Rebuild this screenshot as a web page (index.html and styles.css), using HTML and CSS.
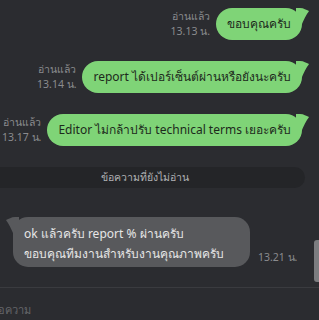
FILE: index.html
```html
<!DOCTYPE html>
<html lang="th">
<head>
    <meta charset="UTF-8">
    <title>Chat</title>
    <link rel="stylesheet" href="styles.css">
</head>
<body>
    <div class="chat">
        <div class="row out first">
            <div class="meta">
                <span>อ่านแล้ว</span>
                <span>13.13 น.</span>
            </div>
            <div class="bubble green">
                ขอบคุณครับ
                <svg class="tail-r" width="14" height="16" viewBox="0 0 14 16"><path d="M0 0 L4 0 C8 0 10 2 13 3 C11 6 9 9 6 16 L0 16 Z" fill="#7fd477"/></svg>
            </div>
        </div>
        <div class="row out">
            <div class="meta">
                <span>อ่านแล้ว</span>
                <span>13.14 น.</span>
            </div>
            <div class="bubble green">
                report ได้เปอร์เซ็นต์ผ่านหรือยังนะครับ
                <svg class="tail-r" width="14" height="16" viewBox="0 0 14 16"><path d="M0 0 L4 0 C8 0 10 2 13 3 C11 6 9 9 6 16 L0 16 Z" fill="#7fd477"/></svg>
            </div>
        </div>
        <div class="row out">
            <div class="meta">
                <span>อ่านแล้ว</span>
                <span>13.17 น.</span>
            </div>
            <div class="bubble green">
                Editor ไม่กล้าปรับ technical terms เยอะครับ
                <svg class="tail-r" width="14" height="16" viewBox="0 0 14 16"><path d="M0 0 L4 0 C8 0 10 2 13 3 C11 6 9 9 6 16 L0 16 Z" fill="#7fd477"/></svg>
            </div>
        </div>

        <div class="unread">ข้อความที่ยังไม่อ่าน</div>

        <div class="row in">
            <div class="bubble grey">
                <svg class="tail-l" width="14" height="16" viewBox="0 0 14 16"><path d="M14 0 L10 0 C6 0 4 2 1 3 C3 6 5 9 8 16 L14 16 Z" fill="#58595c"/></svg>
                <div class="line">ok แล้วครับ report % ผ่านครับ</div>
                <div class="line">ขอบคุณทีมงานสำหรับงานคุณภาพครับ</div>
            </div>
            <div class="meta time">13.21 น.</div>
        </div>
        <div class="thumb"></div>
    </div>
    <div class="composer">
        <span class="placeholder">ข้อความ</span>
    </div>
</body>
</html>
```

FILE: styles.css
```css
body {
    margin: 0;
    background-color: #2b2c30;
    font-family: "Noto Sans", "DejaVu Sans", sans-serif;
    overflow: hidden;
}

.chat {
    position: relative;
    height: 287px;
    border-bottom: 1px solid #3a3b3f;
}

.row {
    display: flex;
    align-items: flex-end;
}

.row.out {
    justify-content: flex-end;
    padding-right: 17px;
    margin-top: 21px;
}

.row.first {
    padding-top: 8px;
    margin-top: 0;
}

.meta {
    flex-shrink: 0;
    display: flex;
    flex-direction: column;
    align-items: flex-end;
    margin-right: 6px;
    font-size: 10.5px;
    line-height: 15px;
    color: #8a8b8e;
    white-space: nowrap;
    padding-bottom: 1px;
}

.bubble {
    position: relative;
    flex-shrink: 0;
    white-space: nowrap;
    font-size: 12px;
}

.bubble.green {
    background-color: #7fd477;
    color: #1d2a1c;
    height: 32px;
    line-height: 32px;
    padding: 0 11px;
    border-radius: 16px;
}

.tail-r {
    position: absolute;
    top: 0;
    right: -8px;
}

.unread {
    margin-top: 21px;
    margin-right: 14px;
    padding-right: 16px;
    height: 21px;
    line-height: 21px;
    background-color: #242528;
    border-radius: 0 11px 11px 0;
    text-align: center;
    font-size: 10.5px;
    color: #b0b1b4;
    white-space: nowrap;
}

.row.in {
    margin-top: 29px;
    padding-left: 13px;
}

.bubble.grey {
    background-color: #58595c;
    color: #e6e6e6;
    padding: 7px 16px 3px 11px;
    border-radius: 15px;
    width: 210px;
}

.line {
    height: 20px;
    line-height: 20px;
}

.tail-l {
    position: absolute;
    top: 0;
    left: -8px;
}

.meta.time {
    margin-left: 8px;
    margin-right: 0;
    padding-bottom: 2px;
}

.thumb {
    position: absolute;
    right: 0;
    top: 240px;
    width: 5px;
    height: 42px;
    background-color: #7c7d80;
    border-radius: 3px 0 0 3px;
}

.composer {
    height: 33px;
    padding-top: 13px;
    box-sizing: border-box;
}

.placeholder {
    display: block;
    margin-left: -10px;
    height: 18px;
    line-height: 18px;
    font-size: 11px;
    color: #65666a;
    white-space: nowrap;
}
```
